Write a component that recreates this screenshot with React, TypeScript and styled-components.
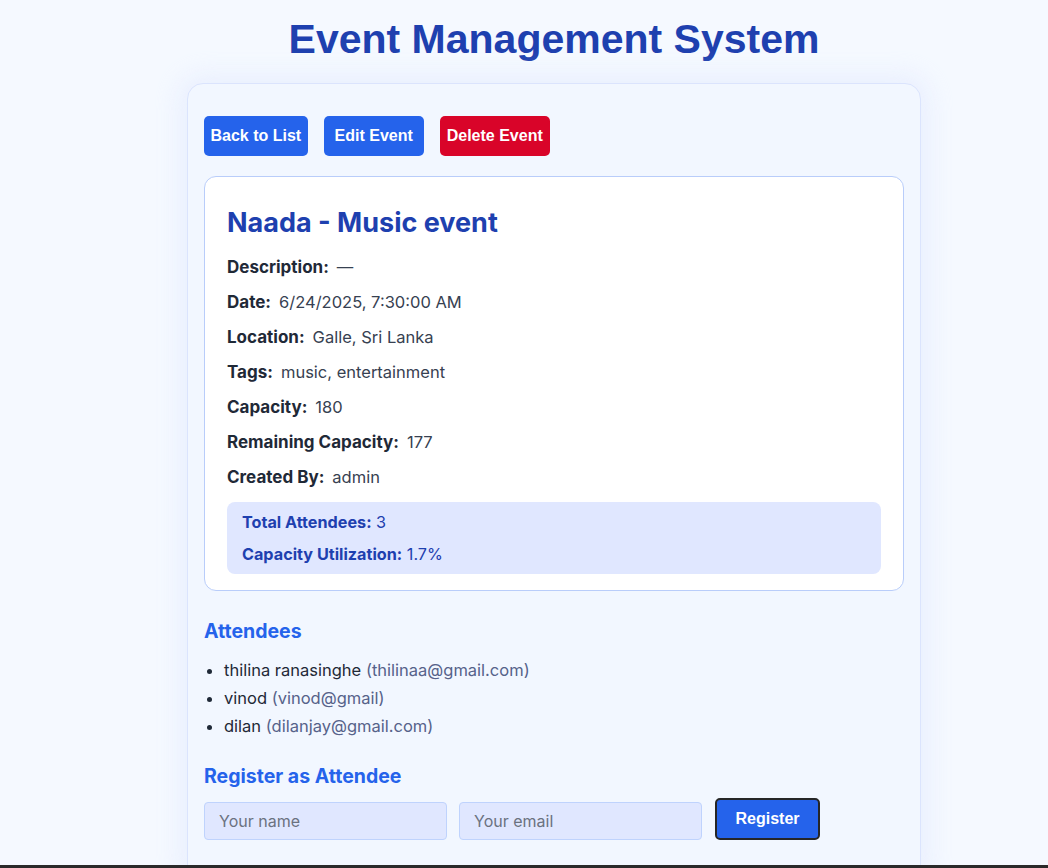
import React from 'react';
import styled, { createGlobalStyle } from 'styled-components';

const GlobalStyle = createGlobalStyle`
  html, body {
    margin: 0;
    padding: 0;
    background: #f5f9ff;
    font-family: Inter, "Noto Sans", sans-serif;
    color: #1f2937;
  }
  * {
    box-sizing: border-box;
  }
`;

const Page = styled.div`
  display: flex;
  flex-direction: column;
  align-items: center;
  padding-left: 60px;
  min-height: 868px;
`;

const PageTitle = styled.h1`
  margin: 16px 0 21px;
  font-family: "Liberation Sans", Arial, sans-serif;
  font-size: 41px;
  font-weight: 700;
  line-height: 46px;
  color: #1e40af;
`;

const Panel = styled.div`
  width: 734px;
  padding: 32px 16px 40px;
  background: #f2f7ff;
  border: 1px solid #dbe4fd;
  border-radius: 16px;
  box-shadow: 0 0 24px 8px rgba(219, 228, 253, 0.45);
`;

const Toolbar = styled.div`
  display: flex;
  gap: 16px;
  margin-bottom: 20px;
`;

const ActionButton = styled.button<{ $danger?: boolean }>`
  height: 40px;
  min-width: 100px;
  padding: 0 ${p => (p.$danger ? '7px' : '6.5px')};
  border: none;
  border-radius: 5px;
  background: ${p => (p.$danger ? '#d90429' : '#2563eb')};
  color: #fff;
  font-family: "Liberation Sans", Arial, sans-serif;
  font-size: 16px;
  font-weight: 700;
  cursor: pointer;
`;

const DetailCard = styled.div`
  background: #fff;
  border: 1px solid #b9cdfa;
  border-radius: 12px;
  padding: 29px 22px 16px;
`;

const EventTitle = styled.h2`
  margin: 0 0 18px;
  font-size: 27px;
  font-weight: 700;
  line-height: 34px;
  color: #1e40af;
`;

const InfoRow = styled.p`
  margin: 0 0 16px;
  font-size: 16.5px;
  line-height: 19px;
  color: #374151;
`;

const Label = styled.strong`
  font-size: 17px;
  font-weight: 700;
  color: #1f2937;
  margin-right: 8px;
`;

const StatsBox = styled.div`
  display: flex;
  flex-direction: column;
  gap: 12px;
  margin-top: -1px;
  padding: 10px 15px;
  background: #e0e7ff;
  border-radius: 8px;
  color: #1e40af;
  font-size: 16.2px;
  line-height: 20px;
`;

const StatLabel = styled.strong`
  font-weight: 700;
`;

const SectionHeading = styled.h3<{ $top: number }>`
  margin: ${p => p.$top}px 0 14px;
  font-size: 19.5px;
  font-weight: 700;
  line-height: 22px;
  color: #2563eb;
`;

const AttendeeList = styled.ul`
  margin: 0;
  padding-left: 20px;
  font-size: 16.5px;
  line-height: 28px;
  color: #1f2937;
`;

const Email = styled.span`
  color: #56628a;
`;

const RegisterForm = styled.form`
  display: flex;
  align-items: flex-end;
  gap: 12px;
  margin-top: -3px;
`;

const TextInput = styled.input`
  width: 243px;
  height: 38px;
  padding: 0 14px;
  background: #e0e7ff;
  border: 1px solid #bfd3fd;
  border-radius: 4px;
  font-family: Inter, "Noto Sans", sans-serif;
  font-size: 16px;
  color: #1f2937;

  &::placeholder {
    color: #6b7280;
  }
`;

const SubmitButton = styled.button`
  height: 42px;
  width: 105px;
  margin-left: 1px;
  border: 2px solid #262626;
  border-radius: 5px;
  background: #2563eb;
  color: #fff;
  font-family: "Liberation Sans", Arial, sans-serif;
  font-size: 16px;
  font-weight: 700;
`;

const BottomEdge = styled.div`
  position: fixed;
  left: 0;
  right: 0;
  bottom: 0;
  height: 3px;
  background: #2a2a2a;
`;

const details: [string, string][] = [
  ['Description:', '—'],
  ['Date:', '6/24/2025, 7:30:00 AM'],
  ['Location:', 'Galle, Sri Lanka'],
  ['Tags:', 'music, entertainment'],
  ['Capacity:', '180'],
  ['Remaining Capacity:', '177'],
  ['Created By:', 'admin'],
];

const attendees = [
  { name: 'thilina ranasinghe', email: 'thilinaa@gmail.com' },
  { name: 'vinod', email: 'vinod@gmail' },
  { name: 'dilan', email: 'dilanjay@gmail.com' },
];

export default function App() {
  return (
    <>
      <GlobalStyle />
      <Page>
        <PageTitle>Event Management System</PageTitle>
        <Panel>
          <Toolbar>
            <ActionButton>Back to List</ActionButton>
            <ActionButton>Edit Event</ActionButton>
            <ActionButton $danger>Delete Event</ActionButton>
          </Toolbar>

          <DetailCard>
            <EventTitle>Naada - Music event</EventTitle>
            {details.map(([label, value]) => (
              <InfoRow key={label}>
                <Label>{label}</Label>
                {value}
              </InfoRow>
            ))}
            <StatsBox>
              <div>
                <StatLabel>Total Attendees:</StatLabel> 3
              </div>
              <div>
                <StatLabel>Capacity Utilization:</StatLabel> 1.7%
              </div>
            </StatsBox>
          </DetailCard>

          <SectionHeading $top={29}>Attendees</SectionHeading>
          <AttendeeList>
            {attendees.map(a => (
              <li key={a.email}>
                {a.name} <Email>({a.email})</Email>
              </li>
            ))}
          </AttendeeList>

          <SectionHeading $top={25}>Register as Attendee</SectionHeading>
          <RegisterForm onSubmit={e => e.preventDefault()}>
            <TextInput placeholder="Your name" />
            <TextInput placeholder="Your email" />
            <SubmitButton type="submit">Register</SubmitButton>
          </RegisterForm>
        </Panel>
      </Page>
      <BottomEdge />
    </>
  );
}
